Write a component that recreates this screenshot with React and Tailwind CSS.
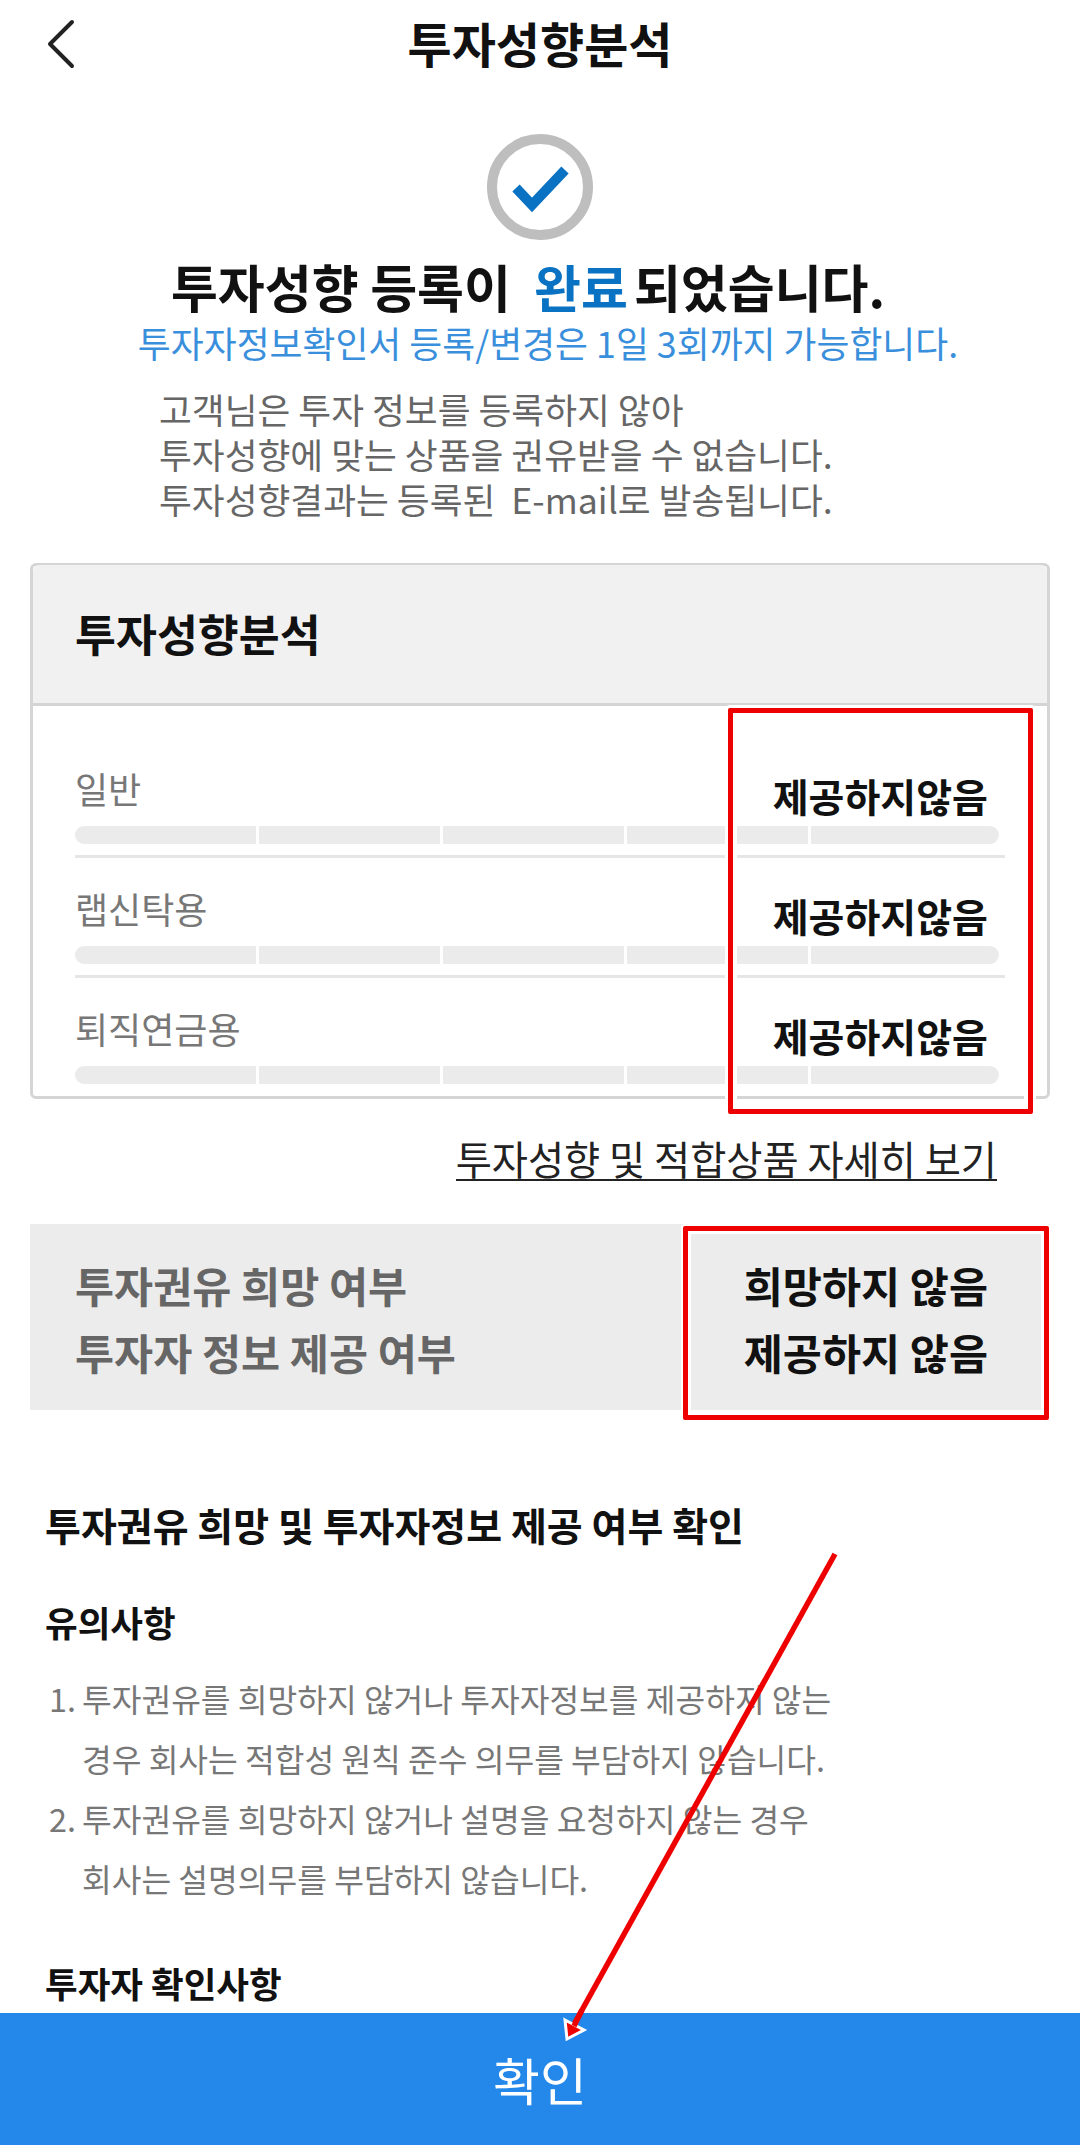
import React from 'react';

const rows = ['일반', '랩신탁용', '퇴직연금용'];
const notes = [
  ['1.', '투자권유를 희망하지 않거나 투자자정보를 제공하지 않는'],
  ['', '경우 회사는 적합성 원칙 준수 의무를 부담하지 않습니다.'],
  ['2.', '투자권유를 희망하지 않거나 설명을 요청하지 않는 경우'],
  ['', '회사는 설명의무를 부담하지 않습니다.'],
];

const App = () => {
  return (
    <div className="relative flex flex-col h-[2145px] bg-white overflow-hidden font-['Noto_Sans_CJK_KR','Noto_Sans',sans-serif]">
      <main className="flex-1 overflow-hidden">
        {/* Header */}
        <header className="h-[88px] grid grid-cols-[1fr_auto_1fr] items-center">
          <svg width="30" height="50" viewBox="0 0 30 50" className="ml-[46px]" fill="none" stroke="#222" strokeWidth="4" strokeLinecap="round" strokeLinejoin="round">
            <path d="M26 3 L4 25 L26 47" />
          </svg>
          <h1 className="-mt-[4px] text-[48px] leading-[60px] font-bold text-[#111]">투자성향분석</h1>
        </header>

        {/* Done message */}
        <div className="mt-[46px] h-[104px] flex justify-center">
          <svg width="106" height="106" viewBox="0 0 106 106" fill="none">
            <circle cx="53" cy="53" r="48" stroke="#bebebe" strokeWidth="10" />
            <path d="M29 54 L45 71 L78 36" stroke="#0a72c2" strokeWidth="10" />
          </svg>
        </div>
        <h2 className="mt-[18px] h-[60px] pr-[24px] text-center text-[51px] leading-[60px] font-bold text-[#111] whitespace-pre">
          투자성향 등록이  <span className="text-[#0a72c2]">완료</span><span className="ml-[6px]">되었습니다.</span>
        </h2>
        <p className="mt-[4px] pl-[16px] text-center text-[35.8px] leading-[44px] text-[#3a8fdc]">투자자정보확인서 등록/변경은 1일 3회까지 가능합니다.</p>
        <div className="mt-[22px] ml-[159px] text-[35.7px] leading-[45px] text-[#666] whitespace-pre">
          <p>고객님은 투자 정보를 등록하지 않아</p>
          <p>투자성향에 맞는 상품을 권유받을 수 없습니다.</p>
          <p>투자성향결과는 등록된  E-mail로 발송됩니다.</p>
        </div>

        {/* Analysis card */}
        <section className="relative mt-[42px] mx-[30px] h-[536px] border-[3px] border-[#d5d5d5] rounded-md">
          <div className="h-[141px] -mt-px bg-[#f1f1f1] border-b-[3px] border-[#d5d5d5] flex items-center pl-[42px] rounded-t-md">
            <h3 className="-mt-[2px] text-[44.5px] font-bold text-[#111]">투자성향분석</h3>
          </div>
          <div className="h-[389px] overflow-hidden pt-[32px] pl-[42px] pr-[42px]">
            {rows.map((label) => (
              <div key={label} className="h-[120px]">
                <div className="flex justify-between items-start pt-[28px] pr-[17px]">
                  <span className="text-[36px] leading-[44px] text-[#777]">{label}</span>
                  <span className="mt-[7px] text-[39px] leading-[44px] font-bold text-[#111]">제공하지않음</span>
                </div>
                <div className="mt-[9px] mr-[6px] h-[18px] flex gap-[3px] rounded-full overflow-hidden">
                  <div className="w-[181px] bg-[#ebebeb]" />
                  <div className="w-[181px] bg-[#ebebeb]" />
                  <div className="w-[181px] bg-[#ebebeb]" />
                  <div className="w-[181px] bg-[#ebebeb]" />
                  <div className="flex-1 bg-[#ebebeb]" />
                </div>
                <div className="mt-[11px] h-[3px] bg-[#e6e6e6]" />
              </div>
            ))}
          </div>
          <div className="absolute left-[695px] top-[142px] w-[305px] h-[406px] rounded-[2px] border-[5px] border-[#ee0000] shadow-[0_0_0_3px_#fff,inset_0_0_0_4px_#fff]" />
        </section>

        <div className="mt-[38px] flex justify-end pr-[83px]">
          <a className="text-[39.3px] leading-[42px] text-[#222] border-b-2 border-[#222]">투자성향 및 적합상품 자세히 보기</a>
        </div>

        {/* Opt-out panel */}
        <section className="relative mt-[43px] mx-[30px] h-[186px] bg-[#ececec] pt-[27px] pl-[45px] pr-[62px] flex justify-between text-[42.5px] leading-[67px] font-bold">
          <div className="text-[#666]">
            <p>투자권유 희망 여부</p>
            <p>투자자 정보 제공 여부</p>
          </div>
          <div className="text-[#111]">
            <p>희망하지 않음</p>
            <p>제공하지 않음</p>
          </div>
          <div className="absolute left-[653px] top-[2px] w-[366px] h-[194px] rounded-[2px] border-[5px] border-[#ee0000] shadow-[0_0_0_2px_#fff,inset_0_0_0_3px_#fff]" />
        </section>

        {/* Notes */}
        <div className="px-[45px] text-[#111]">
          <h3 className="mt-[89px] text-[39px] leading-[50px] font-bold">투자권유 희망 및 투자자정보 제공 여부 확인</h3>
          <h4 className="mt-[48px] text-[35.5px] leading-[50px] font-bold">유의사항</h4>
          <ul className="mt-[21px] text-[32.3px] leading-[60px] text-[#777]">
            {notes.map(([num, text]) => (
              <li key={text} className="flex whitespace-pre">
                <span className="w-[37px] pl-[4px]">{num}</span>
                <span>{text}</span>
              </li>
            ))}
          </ul>
          <h4 className="mt-[50px] text-[35.5px] leading-[50px] font-bold">투자자 확인사항</h4>
        </div>
      </main>

      <button className="h-[132px] shrink-0 bg-[#2488ea] text-white text-[51px] leading-[60px]">확인</button>

      {/* Annotation arrow */}
      <svg className="absolute inset-0 pointer-events-none" width="1080" height="2145" viewBox="0 0 1080 2145" fill="none">
        <line x1="835" y1="1554" x2="572" y2="2028" stroke="#ee0000" strokeWidth="5.5" />
        <polygon points="565,2020 584,2030 567,2039" fill="#ee0000" stroke="#fff" strokeWidth="3" />
        <line x1="582" y1="2010" x2="574" y2="2026" stroke="#ee0000" strokeWidth="5.5" />
      </svg>
    </div>
  );
};

export default App;
